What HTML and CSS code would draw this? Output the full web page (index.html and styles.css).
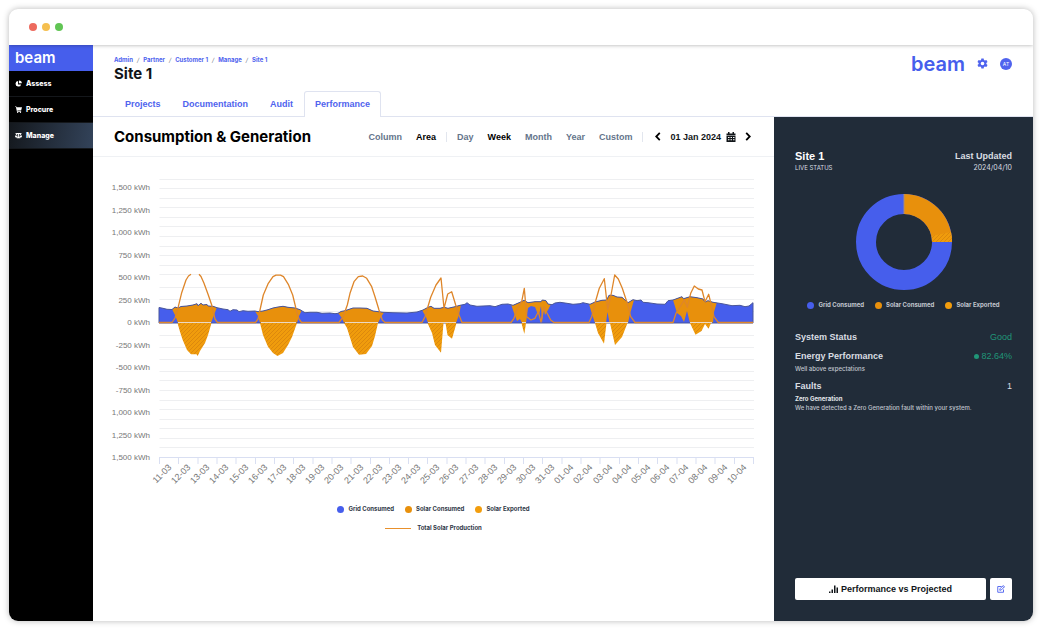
FILE: index.html
```html
<!DOCTYPE html>
<html lang="en">
<head>
<meta charset="utf-8">
<title>Site 1 – Performance</title>
<link rel="stylesheet" href="styles.css">
</head>
<body>
<div class="window">
  <div class="titlebar"><span class="dot dot-red"></span><span class="dot dot-yellow"></span><span class="dot dot-green"></span></div>
  <div class="app">
    <nav class="sidebar">
      <a class="brand" href="#">beam</a>
      <a class="nav-item" href="#"><svg class="nav-icon" viewBox="0 0 16 16"><path d="M7 2a6.500 6.500 0 1 0 7 8H7z"/><path d="M9 1v6.500h6.500A6.500 6.500 0 0 0 9 1z"/></svg>Assess</a>
      <a class="nav-item" href="#"><svg class="nav-icon" viewBox="0 0 16 16"><path d="M0 1h3l.5 2H16l-2 7H5.500l.3 1.500H14V13H4.500L2 2.500H0z"/><circle cx="6" cy="14.500" r="1.500"/><circle cx="12.500" cy="14.500" r="1.500"/></svg>Procure</a>
      <a class="nav-item nav-active" href="#"><svg class="nav-icon" viewBox="0 0 16 16"><path d="M1 2h14v2h-2l3 6a3 2.500 0 0 1-6 0l2-5H9v7h3v2H4v-2h3V5H4l2 5a3 2.500 0 0 1-6 0l3-6H1zM3 6L1.800 9h2.400zM13 6l-1.200 3h2.400z"/></svg>Manage</a>
    </nav>
    <div class="content">
      <header class="header">
        <div class="heading">
          <div class="crumbs"><a href="#">Admin</a><i>/</i><a href="#">Partner</a><i>/</i><a href="#">Customer 1</a><i>/</i><a href="#">Manage</a><i>/</i><a href="#">Site 1</a></div>
          <h1>Site 1</h1>
          <div class="tabs"><a class="tab" href="#">Projects</a><a class="tab" href="#">Documentation</a><a class="tab" href="#">Audit</a><a class="tab tab-active" href="#">Performance</a></div>
        </div>
        <div class="account">
          <span class="logo">beam</span>
          <button class="plain" aria-label="Settings"><svg class="gear" viewBox="0 0 24 24"><path fill-rule="evenodd" d="M9.500 1h5l.7 3.400 2 1.100 3.300-1.100 2.500 4.300L20.400 11v2l2.600 2.300-2.500 4.300-3.300-1.100-2 1.100-.7 3.400h-5l-.7-3.400-2-1.100-3.300 1.100L1 15.300 3.600 13v-2L1 8.700l2.500-4.300 3.300 1.100 2-1.100zM12 8a4 4 0 1 0 0 8 4 4 0 0 0 0-8z"/></svg></button>
          <span class="avatar">AT</span>
        </div>
      </header>
      <div class="columns">
        <main class="main">
          <div class="toolbar">
            <h2>Consumption &amp; Generation</h2>
            <div class="controls">
              <div class="group"><button class="opt">Column</button><button class="opt opt-on">Area</button></div>
              <div class="group"><button class="opt">Day</button><button class="opt opt-on">Week</button><button class="opt">Month</button><button class="opt">Year</button><button class="opt">Custom</button></div>
              <div class="dates">
                <button class="plain" aria-label="Previous"><svg class="chev" viewBox="0 0 6 10"><path d="M5 1L1 5l4 4"/></svg></button>
                <button class="opt date">01 Jan 2024<svg class="cal" viewBox="0 0 20 20"><path fill-rule="evenodd" d="M4 0h3v3h6V0h3v3h3v4H1V3h3zM1 8h18v12H1zm3 2v2h3v-2zm5 0v2h3v-2zm5 0v2h3v-2zM4 14.500v2h3v-2zm5 0v2h3v-2zm5 0v2h3v-2z"/></svg></button>
                <button class="plain" aria-label="Next"><svg class="chev" viewBox="0 0 6 10"><path d="M1 1l4 4-4 4"/></svg></button>
              </div>
            </div>
          </div>
          <svg class="chart" viewBox="93 157 681 333" role="img" aria-label="Consumption and generation by day">
            <defs>
              <pattern id="hatch" width="4" height="4" patternUnits="userSpaceOnUse"><rect width="4" height="4" fill="#f09c0c"/><path d="M-1 1l2-2M0 4l4-4M3 5l2-2" stroke="#dc880d" stroke-width="1"/></pattern>
              <clipPath id="demand"><path id="area" d="M159 323V307.500L163 308.300 167 309.300 172 309.500 175 307 178 308 181 306.500 187 306 190 305.500 193 305 197 303.700 198 305.700 201 303.300 203 305 207 304.500 208 306 213 306.300 217 307.700 223 309 228 309.700 230 311.300 233 309.700 237 310 239 311.700 243 310.700 248 311.300 255 311 258 311.700 263 311 268 309.700 273 308 278 307 283 306.300 288 307.300 295 308 300 309.700 305 312.700 310 312.300 317 312.300 322 313.300 330 313 335 313.700 338 313.300 341 311.500 345 310.700 353 308 360 308 367 308.300 373 311 383 312.300 393 312.700 407 313 417 312 423 310 428 307.300 431 306.300 434 308.300 440 308.300 444 307.300 448 308.300 455 306.700 460 305.300 465 304.300 467 302.700 470 305 477 306.300 483 306 490 305.700 495 306.700 502 304.300 508 304 513 305.300 520 302.300 524 300.300 528 302.700 535 301.700 541 301.700 542.300 300 546 300.700 548 304 552 304.700 555 303 560 302.300 567 303.300 573 304.300 580 303.700 583 302.700 590 304.300 595 302 602 300.300 606.700 300 609 295.300 613 295.300 617 297 622 297.300 625 300 628 302.700 633 299.700 637 300.700 641 300 643 302.300 648 302.700 657 304 665 304.300 668 300.700 673 300 682 296.700 683.500 298.700 690 296.700 697 297.700 703 299 705 302 708 300.700 713 302.300 722 303.700 732 305.700 740 305.300 745 306.700 749 306 753 302.700V323z"/></clipPath>
            </defs>
            <path class="grid" d="M159.500 179.500H754M159.500 188.500H754M159.500 198.500H754M159.500 207.500H754M159.500 217.500H754M159.500 226.500H754M159.500 236.500H754M159.500 246.500H754M159.500 255.500H754M159.500 265.500H754M159.500 274.500H754M159.500 287.500H754M159.500 299.500H754M159.500 311.500H754M159.500 335.500H754M159.500 347.500H754M159.500 359.500H754M159.500 371.500H754M159.500 380.500H754M159.500 390.500H754M159.500 400.500H754M159.500 409.500H754M159.500 419.500H754M159.500 428.500H754M159.500 438.500H754M159.500 447.500H754"/>
            <path class="axis" d="M159 457.500H754M159.500 457v7M178.500 457v7M198 457v7M217 457v7M236 457v7M255.500 457v7M274.500 457v7M293.500 457v7M313 457v7M332 457v7M351 457v7M370.500 457v7M389.500 457v7M408.500 457v7M427.500 457v7M447 457v7M466 457v7M485 457v7M504.500 457v7M523.500 457v7M542.500 457v7M562 457v7M581 457v7M600 457v7M619.500 457v7M638.500 457v7M657.500 457v7M677 457v7M696 457v7M715 457v7M734.500 457v7M753.500 457v7"/>
            <use href="#area" fill="#465eec"/>
            <g clip-path="url(#demand)" fill="#e8900c">
              <path d="M172 290V309L175 315 178 323H211L214 315 217 307V290z"/>
              <path d="M255 290V311L258 316 260 323H297L299 316 302 310V290z"/>
              <path d="M338 290V313L342 318 344 323H378L381 317 385 311V290z"/>
              <path d="M422 290V310L426 317 428 323H456L459 315 461 305V290z"/>
              <path d="M511 290V304L514 313 517 321 520 319 522 323H526L528 308 531 306 535 307 537 312 539 315 541 306 542 323 543.500 308 545 315 548 310 551 304V290z"/>
              <path d="M589 290V304L592 314 595 323H606L607.500 312 609.500 323H628L630 314 634 300V290z"/>
              <path d="M673 290V300L677 313 681 316 684 322 687 311 690 323H713L714 312 717 302V290z"/>
            </g>
            <use href="#area" class="demand-line"/>
            <g fill="url(#hatch)">
              <path d="M177.500 323L180 331.700 182.700 340 187 350 191 354.300 196.500 354.300 197.700 356 200 351 205 343 208 335 211.500 323z"/>
              <path d="M260 323L263 335 268 346.700 273 353 277.500 356 283 353 288 345 292 337 297 323z"/>
              <path d="M344 323L347 328 353 347 359 354.700 366 354 372 346 375 336 378 323z"/>
              <path d="M427.500 323L432 333 435 345 441 352.700 443.500 323H445.500L447.500 335 452 338.700 456.500 323z"/>
              <path d="M521.500 323L524.300 334 526 323z"/>
              <path d="M595 323L598 333 604 343.700 606.500 323H610L615 345 622 337 627.500 323z"/>
              <path d="M690 323L695.500 334.700 701.500 331 705 324 708.500 328.700 711 323z"/>
            </g>
            <path class="production" d="M159 322.500H172L175 318 178.300 306.700 181.700 292.700 186 280 188.500 276 191 274.300M199 274.300L201 276.500 204 283.300 208.300 295 211.700 305 215 319 217.500 322.500H255.500L258 319 260 310 263.300 295 268.300 283.300 273 276.700 276 275.200 280.500 275.200 283.500 276.700 288.300 284.300 292.700 295 296.700 311.700 299 319 301.500 322.500H339L343 317 347.300 305 350 293.300 354 281.700 358.300 276.700 362.700 276 366.700 278.300 371.700 286.700 375 296.700 379 310 382.300 320 385 322.500H422L425 316.700 430.700 297.300 436 285 441 278 444 308.300 447.700 294 451.700 291.700 455.700 305 459 315 462 322.500H511L514 318.300 516.700 310 521.700 301.700 524.300 288.300 526.700 316.700 531 320 535 318.300 538.300 311.700 541 322 544 307 547 313 550.700 320 554 322.500H589L591.700 316.700 595 303.300 599.300 288.300 604.300 278.700 607.700 309.300 611 295 614.700 275 618.300 279 622.300 288.300 627.300 303.300 630.700 316.700 635 322.500H673L676 313.300 684.300 300 687.300 307.300 690.700 293.300 694.300 286 698.300 289 702 290 705 301.700 708.700 294.300 711.700 306.700 714 316.700 718.300 322.500H753"/>
            <path class="zero" d="M178 322.500H211M261 322.500H296M345 322.500H378M428 322.500H456M522 322.500H526M595 322.500H628M690 322.500H712"/>
            <g class="y-labels"><text x="150" y="190">1,500 kWh</text><text x="150" y="213">1,250 kWh</text><text x="150" y="235">1,000 kWh</text><text x="150" y="258">750 kWh</text><text x="150" y="280">500 kWh</text><text x="150" y="303">250 kWh</text><text x="150" y="325">0 kWh</text><text x="150" y="348">-250 kWh</text><text x="150" y="370">-500 kWh</text><text x="150" y="393">-750 kWh</text><text x="150" y="415">1,000 kWh</text><text x="150" y="438">1,250 kWh</text><text x="150" y="460">1,500 kWh</text></g>
            <g class="x-labels"><text transform="translate(172 468) rotate(-45)">11-03</text><text transform="translate(191 468) rotate(-45)">12-03</text><text transform="translate(210 468) rotate(-45)">13-03</text><text transform="translate(229 468) rotate(-45)">14-03</text><text transform="translate(249 468) rotate(-45)">15-03</text><text transform="translate(268 468) rotate(-45)">16-03</text><text transform="translate(287 468) rotate(-45)">17-03</text><text transform="translate(306 468) rotate(-45)">18-03</text><text transform="translate(325 468) rotate(-45)">19-03</text><text transform="translate(344 468) rotate(-45)">20-03</text><text transform="translate(364 468) rotate(-45)">21-03</text><text transform="translate(383 468) rotate(-45)">22-03</text><text transform="translate(402 468) rotate(-45)">23-03</text><text transform="translate(421 468) rotate(-45)">24-03</text><text transform="translate(440 468) rotate(-45)">25-03</text><text transform="translate(459 468) rotate(-45)">26-03</text><text transform="translate(479 468) rotate(-45)">27-03</text><text transform="translate(498 468) rotate(-45)">28-03</text><text transform="translate(517 468) rotate(-45)">29-03</text><text transform="translate(536 468) rotate(-45)">30-03</text><text transform="translate(555 468) rotate(-45)">31-03</text><text transform="translate(574 468) rotate(-45)">01-04</text><text transform="translate(593 468) rotate(-45)">02-04</text><text transform="translate(613 468) rotate(-45)">03-04</text><text transform="translate(632 468) rotate(-45)">04-04</text><text transform="translate(651 468) rotate(-45)">05-04</text><text transform="translate(670 468) rotate(-45)">06-04</text><text transform="translate(689 468) rotate(-45)">07-04</text><text transform="translate(708 468) rotate(-45)">08-04</text><text transform="translate(728 468) rotate(-45)">09-04</text><text transform="translate(747 468) rotate(-45)">10-04</text></g>
          </svg>
          <div class="legend"><span class="key"><b class="swatch grid-c"></b>Grid Consumed</span><span class="key"><b class="swatch solar-c"></b>Solar Consumed</span><span class="key"><b class="swatch export-c"></b>Solar Exported</span></div>
          <div class="legend"><span class="key"><b class="line"></b>Total Solar Production</span></div>
        </main>
        <aside class="status">
          <div class="row"><h3 class="site">Site 1</h3><h3>Last Updated</h3></div>
          <div class="row small"><span>LIVE STATUS</span><span class="day">2024/04/10</span></div>
          <svg class="donut" viewBox="0 0 96 96" role="img" aria-label="Energy split">
            <circle cx="48" cy="48" r="38" fill="none" stroke="#465eec" stroke-width="20"/>
            <path d="M48 0A48 48 0 0 1 96 48H76A28 28 0 0 0 48 20z" fill="#e8900c"/>
            <path d="M95 38A48 48 0 0 1 96 48H76A28 28 0 0 0 75.500 42z" fill="url(#hatch)"/>
            <path d="M48 0V20" stroke="#a98b7c" stroke-width="1"/>
          </svg>
          <div class="legend side"><span class="key"><b class="swatch grid-c"></b>Grid Consumed</span><span class="key"><b class="swatch solar-c"></b>Solar Consumed</span><span class="key"><b class="swatch export-c"></b>Solar Exported</span></div>
          <section class="stat"><div class="row"><h3>System Status</h3><span class="value good">Good</span></div></section>
          <section class="stat"><div class="row"><h3>Energy Performance</h3><span class="value good"><b class="bullet"></b>82.64%</span></div><p class="below">Well above expectations</p></section>
          <section class="stat"><div class="row"><h3>Faults</h3><span class="value">1</span></div><p class="fault">Zero Generation</p><p>We have detected a Zero Generation fault within your system.</p></section>
          <div class="actions">
            <button class="action wide"><svg class="bars" viewBox="0 0 18 16"><path d="M0 13h3v3H0zM5 9h3v7H5zM10 1h3v15h-3zM15 5h3v11h-3z"/></svg>Performance vs Projected</button>
            <button class="action" aria-label="Edit"><svg class="edit" viewBox="0 0 16 16"><path d="M9 3H1.500v11.500H13V9M6 7.500L12.500 1 15 3.500 8.500 10 5.500 10.500zM11 2.500L13.500 5"/></svg></button>
          </div>
        </aside>
      </div>
    </div>
  </div>
</div>
</body>
</html>
```

FILE: styles.css
```css
* { box-sizing: border-box; }
body {
  margin: 0;
  padding: 9px;
  min-height: 100vh;
  display: flex;
  background: #fff;
  font-family: Inter, "Liberation Sans", sans-serif;
  font-size: 8px;
  line-height: 10px;
  color: #111519;
}
h1, h2, h3, p { margin: 0; }
a { text-decoration: none; color: inherit; }
button {
  font: inherit;
  color: inherit;
  border: 0;
  padding: 0;
  background: none;
}
svg { display: block; }
.window {
  flex: 1;
  display: flex;
  flex-direction: column;
  border-radius: 9px;
  overflow: hidden;
  background: #fff;
  box-shadow: 0 0 6px rgba(0, 0, 0, .28);
}
.titlebar {
  height: 36px;
  padding-left: 20px;
  display: flex;
  align-items: center;
  gap: 5px;
  position: relative;
  box-shadow: 0 0 4px rgba(0, 0, 0, .35);
}
.dot { width: 8px; height: 8px; border-radius: 50%; }
.dot-red { background: #ed6a5e; }
.dot-yellow { background: #f5bf4f; }
.dot-green { background: #61c554; }
.app { flex: 1; display: flex; }
.sidebar { width: 84px; background: #000; color: #fff; font-weight: 700; }
.brand {
  display: flex;
  align-items: center;
  height: 26px;
  padding-left: 6px;
  background: #465eec;
  font-size: 15px;
  font-weight: 600;
}
.nav-item {
  display: flex;
  align-items: center;
  gap: 4px;
  height: 26px;
  padding-left: 6px;
  border-bottom: 1px solid #14171b;
  font-size: 7px;
  font-weight: 800;
}
.nav-active { background: linear-gradient(100deg, #14181d, #33435a); }
.nav-icon { width: 7px; height: 7px; fill: #fff; }
.content { flex: 1; min-width: 0; display: flex; flex-direction: column; }
.header {
  display: flex;
  justify-content: space-between;
  padding: 10px 21px 0;
  border-bottom: 1px solid #dfe3f0;
}
.crumbs {
  display: flex;
  gap: 4px;
  font-size: 6px;
  line-height: 9px;
  font-weight: 700;
  color: #4f63ee;
}
.crumbs i { color: #6b7280; font-weight: 400; }
h1 { font-size: 15px; line-height: 20px; font-weight: 700; }
.tabs { display: flex; margin: 7px 0 -1px; }
.tab {
  height: 26px;
  padding: 7px 10px 0;
  border: 1px solid transparent;
  border-bottom: 0;
  border-radius: 3px 3px 0 0;
  font-family: "Liberation Sans", Arial, sans-serif;
  font-size: 9px;
  font-weight: 700;
  color: #4f63ee;
}
.tab-active { background: #fff; border-color: #dfe3f0; }
.account { display: flex; align-items: center; gap: 12px; height: 17px; }
.logo { font-size: 20px; line-height: 16px; font-weight: 600; color: #465eec; }
.gear { width: 11px; height: 11px; fill: #4f63ee; }
.avatar {
  width: 12px;
  height: 12px;
  border-radius: 50%;
  background: #5063ee;
  color: #fff;
  font-size: 5px;
  line-height: 12px;
  text-align: center;
}
.columns { flex: 1; display: flex; }
.main { flex: 1; min-width: 0; }
.toolbar {
  display: flex;
  align-items: center;
  justify-content: space-between;
  height: 40px;
  padding: 0 23px 0 21px;
  border-bottom: 1px solid #eff1f4;
}
h2 { font-size: 15px; line-height: 20px; font-weight: 700; color: #000; }
.controls, .group, .dates { display: flex; align-items: center; }
.group { gap: 14px; padding-right: 10px; margin-right: 10px; border-right: 1px solid #e2e6ee; }
.dates { gap: 9px; padding-left: 2px; }
.opt {
  font-family: "Liberation Sans", Arial, sans-serif;
  font-size: 9px;
  font-weight: 700;
  color: #64748b;
}
.opt-on { color: #000; }
.date { display: flex; gap: 5px; color: #111519; }
.cal { width: 10px; height: 10px; fill: #111519; }
.chev { width: 6px; height: 9px; fill: none; stroke: #000; stroke-width: 2; }
.chart { width: 100%; height: auto; }
.grid { stroke: #eeeff1; stroke-width: 1; }
.axis { fill: none; stroke: #d9dff2; stroke-width: 1; }
.demand-line { fill: none; stroke: #4a5699; stroke-width: 1; }
.zero { stroke: #ead9c4; stroke-width: 1; }
.production { fill: none; stroke: #de862a; stroke-width: 1.3; stroke-linejoin: round; }
.y-labels, .x-labels {
  fill: #777;
  text-anchor: end;
  font-family: "Liberation Sans", Arial, sans-serif;
}
.y-labels { font-size: 8px; }
.x-labels { font-size: 9px; }
.legend {
  display: flex;
  justify-content: center;
  gap: 11px;
  margin-top: 14px;
  font-size: 6px;
  font-weight: 700;
  color: #2f3847;
}
.legend + .legend { margin-top: 9px; }
.key { display: flex; align-items: center; gap: 4px; }
.swatch { width: 7px; height: 7px; border-radius: 50%; }
.grid-c { background: #465eec; }
.solar-c { background: #e8900c; }
.export-c { background: #f29d0d; }
.line { width: 26px; height: 1px; margin-right: 2px; background: #e8902c; }
.status {
  width: 259px;
  padding: 33px 21px 21px;
  display: flex;
  flex-direction: column;
  background: #212c39;
  color: #d9dde2;
}
.row { display: flex; justify-content: space-between; align-items: center; }
h3 {
  font-family: "Liberation Sans", Arial, sans-serif;
  font-size: 9px;
  line-height: 12px;
  font-weight: 700;
}
.site { font-size: 11px; color: #fff; }
.value { font-size: 9px; line-height: 10px; font-family: "Liberation Sans", Arial, sans-serif; }
.small { margin-top: 1px; font-size: 6px; }
.day { font-size: 7px; }
.donut { width: 96px; height: 96px; margin: 21px auto 0; }
.side { margin-top: 10px; margin-bottom: 14px; color: #c2c7cf; }
.stat { margin-top: 7px; }
.stat p { font-size: 6px; line-height: 9px; font-weight: 500; color: #c2c7cf; }
.stat .below { margin-top: 2px; }
.stat .fault { font-weight: 700; color: #e3e6ea; margin-top: 2px; }
.good { display: flex; align-items: center; gap: 2px; color: #209678; }
.bullet { width: 5px; height: 5px; border-radius: 50%; background: #209678; }
.actions { display: flex; gap: 4px; margin-top: auto; }
.action {
  display: flex;
  align-items: center;
  justify-content: center;
  gap: 3px;
  width: 22px;
  height: 22px;
  border-radius: 2px;
  background: #fff;
  color: #111519;
  font-family: "Liberation Sans", Arial, sans-serif;
  font-size: 9px;
  font-weight: 700;
}
.wide { flex: 1; }
.bars { width: 9px; height: 8px; fill: #111519; }
.edit { width: 8px; height: 8px; fill: none; stroke: #5b6ef0; stroke-width: 2; }
```
